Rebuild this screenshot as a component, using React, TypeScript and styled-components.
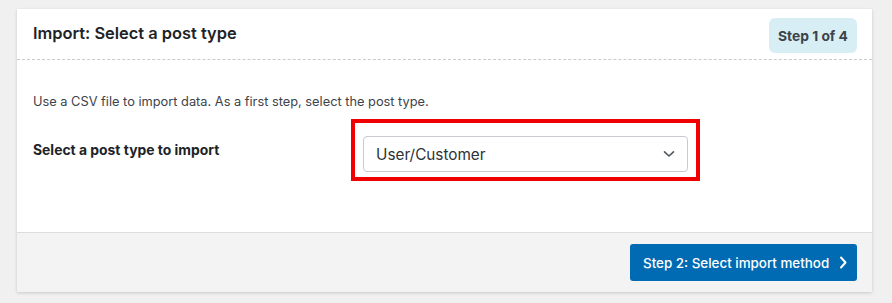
import React from "react";
import styled, { createGlobalStyle } from "styled-components";

const Global = createGlobalStyle`
  html, body { margin: 0; padding: 0; background: #f0f0f1; }
  body { font-family: Inter, "Liberation Sans", Arial, sans-serif; -webkit-font-smoothing: antialiased; }
  * { box-sizing: border-box; }
`;

const Page = styled.div`
  padding: 9px 20px 11px 17px;
`;

const Card = styled.div`
  width: 855px;
  background: #fff;
  box-shadow: 0 1px 3px rgba(0, 0, 0, 0.16);
`;

const Header = styled.div`
  height: 51px;
  padding: 0 15px 0 16px;
  display: flex;
  justify-content: space-between;
  align-items: flex-start;
  border-bottom: 1px dashed #c9cacc;
`;

const Title = styled.h2`
  margin: 0;
  padding-top: 14px;
  font-size: 16.4px;
  line-height: 20px;
  font-weight: 600;
  color: #1d2327;
`;

const Badge = styled.div`
  margin-top: 9px;
  width: 88px;
  height: 35px;
  border-radius: 6px;
  background: #d8eef5;
  color: #3c434a;
  font-size: 13.8px;
  font-weight: 700;
  display: flex;
  align-items: center;
  justify-content: center;
`;

const Body = styled.div`
  padding: 32px 16px 51px;
`;

const Desc = styled.p`
  margin: 0 0 7px;
  font-size: 12.8px;
  line-height: 20px;
  color: #3c434a;
`;

const Row = styled.div`
  display: flex;
  align-items: flex-start;
`;

const Label = styled.label`
  width: 318px;
  padding-top: 21px;
  font-size: 13.9px;
  line-height: 20px;
  font-weight: 700;
  color: #1d2327;
`;

const Highlight = styled.div`
  border: 4px solid #f00000;
  padding: 13px 8px 5px;
  width: 349px;
`;

const Select = styled.div`
  height: 36px;
  border: 1px solid #c8cbd0;
  border-radius: 4px;
  padding: 0 12px 0 12px;
  display: flex;
  align-items: center;
  justify-content: space-between;
  font-size: 15.3px;
  color: #2c3338;
  background: #fff;
`;

const Footer = styled.div`
  border-top: 1px solid #dcdcde;
  background: #f3f3f3;
  padding: 11px 15px 11px;
  display: flex;
  justify-content: flex-end;
`;

const Button = styled.button`
  width: 227px;
  height: 37px;
  border: none;
  border-radius: 3px;
  background: #006bb3;
  color: #fff;
  font-family: inherit;
  font-size: 13.4px;
  font-weight: 500;
  display: flex;
  align-items: center;
  gap: 10px;
  padding: 0 0 0 13px;
`;

export default function App() {
  return (
    <>
      <Global />
      <Page>
        <Card>
          <Header>
            <Title>Import: Select a post type</Title>
            <Badge>Step 1 of 4</Badge>
          </Header>
          <Body>
            <Desc>Use a CSV file to import data. As a first step, select the post type.</Desc>
            <Row>
              <Label>Select a post type to import</Label>
              <Highlight>
                <Select>
                  <span>User/Customer</span>
                  <svg width="12" height="8" viewBox="0 0 12 8" fill="none">
                    <path d="M1.5 1.8 L6 6 L10.5 1.8" stroke="#50575e" strokeWidth="1.6" strokeLinecap="round" strokeLinejoin="round" />
                  </svg>
                </Select>
              </Highlight>
            </Row>
          </Body>
          <Footer>
            <Button>
              <span>Step 2: Select import method</span>
              <svg width="9" height="13" viewBox="0 0 9 13" fill="none">
                <path d="M2 1.5 L6.5 6.5 L2 11.5" stroke="#fff" strokeWidth="2" strokeLinecap="round" strokeLinejoin="round" />
              </svg>
            </Button>
          </Footer>
        </Card>
      </Page>
    </>
  );
}
